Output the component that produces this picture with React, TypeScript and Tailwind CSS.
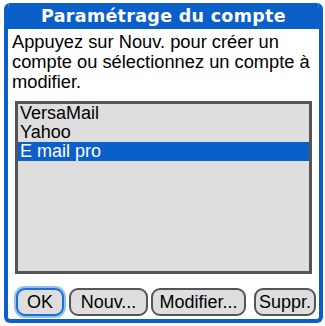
import React from 'react';

const accounts = ['VersaMail', 'Yahoo', 'E mail pro'];

export default function App() {
    const selected = 2;
    return (
        <div className="w-[325px] h-[326px] bg-white pt-[3px] pl-[4px]" style={{ fontFamily: '"Liberation Sans", Arial, sans-serif' }}>
            <div className="w-[319px] h-[320px] border-4 border-t-0 border-[#0b5fc9] rounded-[6px] bg-white flex flex-col overflow-hidden">
                <div className="h-[26px] bg-[#0b5fc9] flex items-center justify-center text-white text-[17.5px] font-bold tracking-[0.3px]" style={{ fontFamily: '"DejaVu Sans", sans-serif' }}>
                    Paramétrage du compte
                </div>
                <p className="px-[4px] pt-[3px] text-[18.3px] leading-[20px] text-black">
                    Appuyez sur Nouv. pour créer un compte ou sélectionnez un compte à modifier.
                </p>
                <div className="ml-[7px] mr-[7px] mt-[9px] h-[173px] border-[3px] border-[#555555] bg-[#dedede]">
                    {accounts.map((name, i) => (
                        <div
                            key={name}
                            className={
                                i === selected
                                    ? 'h-[19px] px-[2px] text-[18px] leading-[19px] bg-[#0b5fc9] text-white'
                                    : 'h-[19px] px-[2px] text-[18px] leading-[19px] text-black'
                            }
                        >
                            {name}
                        </div>
                    ))}
                </div>
                <div className="flex items-center mt-[14px] pl-[8px] text-[18px] text-black">
                    <button className="w-[48px] h-[28px] rounded-[9px] border-2 border-[#1a6fd8] bg-[#dedede] ring-2 ring-[#8fc0f5] leading-none">
                        OK
                    </button>
                    <button className="ml-[5px] w-[79px] h-[28px] rounded-[9px] border-2 border-[#555555] bg-[#dedede] leading-none">
                        Nouv...
                    </button>
                    <button className="ml-[3px] w-[95px] h-[28px] rounded-[9px] border-2 border-[#555555] bg-[#dedede] leading-none">
                        Modifier...
                    </button>
                    <button className="ml-[8px] w-[62px] h-[28px] rounded-[9px] border-2 border-[#555555] bg-[#dedede] leading-none">
                        Suppr.
                    </button>
                </div>
            </div>
        </div>
    );
}
